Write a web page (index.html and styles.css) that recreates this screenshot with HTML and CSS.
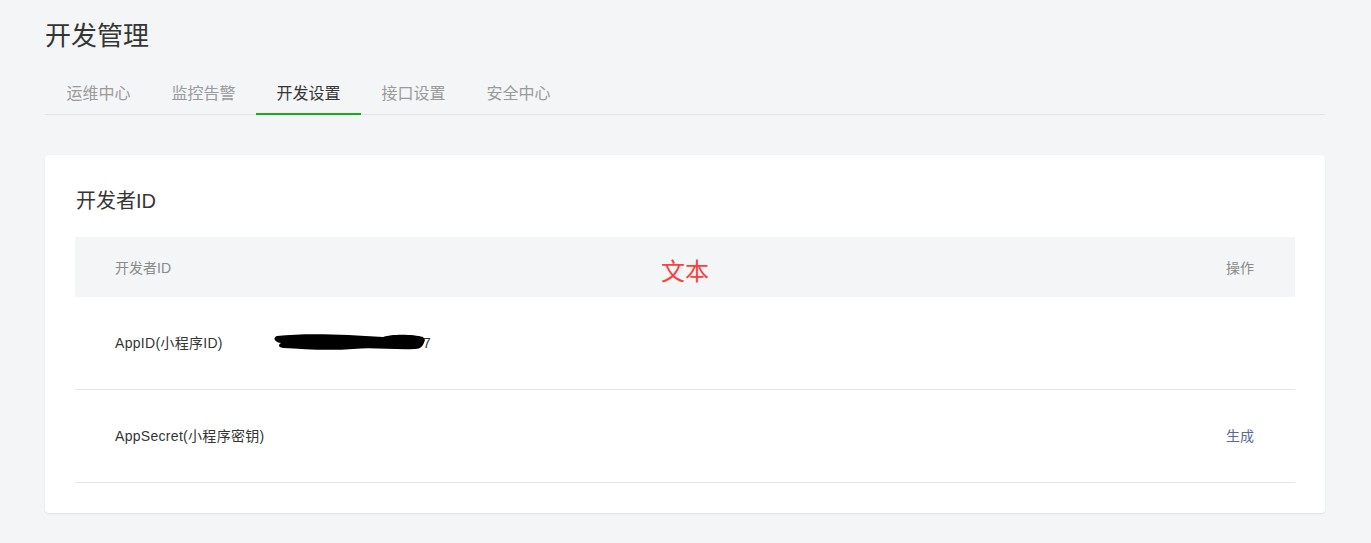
FILE: index.html
```html
<!DOCTYPE html>
<html lang="zh-CN">
<head>
<meta charset="utf-8">
<title>开发管理</title>
<link rel="stylesheet" href="styles.css">
</head>
<body>
<div class="page">
  <h1 class="page-title">开发管理</h1>
  <nav class="tabs">
    <a class="tab">运维中心</a>
    <a class="tab">监控告警</a>
    <a class="tab active">开发设置</a>
    <a class="tab">接口设置</a>
    <a class="tab">安全中心</a>
  </nav>
  <section class="card">
    <h2 class="card-title">开发者ID</h2>
    <div class="table">
      <div class="thead">
        <span class="th">开发者ID</span>
        <span class="note">文本</span>
        <span class="th">操作</span>
      </div>
      <div class="row">
        <span class="label">AppID(小程序ID)</span>
        <span class="value">
          <svg class="redact" width="160" height="22" viewBox="0 0 160 22">
            <path d="M4 4 C30 1 70 2 110 5 C118 2 140 2 150 5 L152 8 C150 14 148 17 142 17 C120 18 100 15 80 17 C55 19 30 17 10 16 C4 15 6 12 8 11 C2 10 -1 6 4 4 Z" fill="#000"/>
          </svg>
          <span class="tail">7</span>
        </span>
      </div>
      <div class="row">
        <span class="label">AppSecret(小程序密钥)</span>
        <a class="link">生成</a>
      </div>
    </div>
  </section>
</div>
</body>
</html>
```
FILE: styles.css
```css
* { box-sizing: border-box; }
html, body {
  margin: 0;
  padding: 0;
  background: #f3f5f6;
  font-family: "Liberation Sans", "Noto Sans CJK SC", sans-serif;
  color: #353535;
}
.page {
  padding: 18px 46px 40px 45px;
}
.page-title {
  margin: 0;
  font-size: 26px;
  line-height: 36px;
  font-weight: 400;
  color: #353535;
}
.tabs {
  display: flex;
  margin-top: 20px;
  padding-left: 1px;
  border-bottom: 1px solid #e2e4e6;
}
.tab {
  position: relative;
  padding: 0 20.5px;
  height: 40px;
  line-height: 40px;
  font-size: 16px;
  color: #9a9a9a;
  cursor: pointer;
}
.tab.active {
  color: #353535;
}
.tab.active::after {
  content: "";
  position: absolute;
  left: 0;
  right: 0;
  bottom: -1px;
  height: 2px;
  background: #1aad19;
}
.card {
  margin-top: 40px;
  background: #fff;
  border-radius: 4px;
  box-shadow: 0 1px 2px rgba(0, 0, 0, 0.08);
  padding: 32px 30px 30px 30px;
}
.card-title {
  margin: 0 0 22px 1px;
  font-size: 20px;
  line-height: 28px;
  font-weight: 400;
  color: #353535;
}
.thead {
  position: relative;
  display: flex;
  justify-content: space-between;
  align-items: center;
  height: 60px;
  padding: 0 41px 0 40px;
  background: #f3f5f6;
}
.th {
  font-size: 14px;
  color: #8a8a8a;
}
.note {
  position: absolute;
  left: 50%;
  top: 50%;
  transform: translate(-50%, -50%);
  margin-top: 2px;
  font-size: 24px;
  color: #fa4040;
}
.row {
  display: flex;
  align-items: center;
  height: 93px;
  padding: 0 41px 3px 40px;
  border-bottom: 1px solid #e5e5e5;
  font-size: 14px;
  color: #353535;
}
.label {
  width: 158px;
  letter-spacing: 0.3px;
}
.value {
  display: flex;
  align-items: center;
  margin-top: 3px;
}
.redact {
  display: block;
  position: relative;
  z-index: 1;
}
.tail {
  margin-left: -10px;
  font-size: 14px;
  color: #353535;
}
.link {
  margin-left: auto;
  color: #576b95;
  cursor: pointer;
}
```
